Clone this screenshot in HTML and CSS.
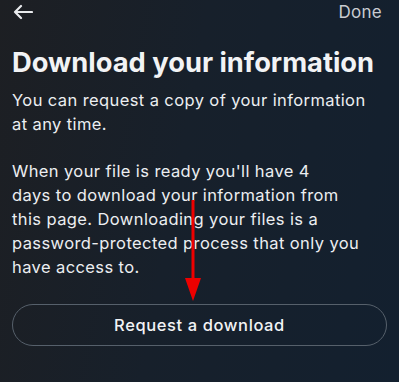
FILE: index.html
```html
<!DOCTYPE html>
<html lang="en">
<head>
  <meta charset="UTF-8" />
  <meta name="viewport" content="width=device-width, initial-scale=1.0" />
  <title>Download your information</title>
  <link rel="stylesheet" href="styles.css">
</head>
<body>
  <div class="top-bar">
    <a href="#" class="back">
      <svg width="20" height="16" viewBox="0 0 20 16" fill="none" stroke="#e8eaed" stroke-width="2.2" stroke-linecap="round" stroke-linejoin="round">
        <path d="M19 8H2M8 2L2 8l6 6"/>
      </svg>
    </a>
    <span class="done">Done</span>
  </div>

  <div class="container">
    <h1 class="header">Download your information</h1>
    <p class="text">You can request a copy of your information<br>at any time.</p>
    <p class="text last">When your file is ready you'll have 4<br>days to download your information from<br>this page. Downloading your files is a<br>password-protected process that only you<br>have access to.</p>

    <button class="button">Request a download</button>
  </div>

  <!-- seta vermelha de anotação -->
  <svg class="annotation" width="20" height="104" viewBox="0 0 20 104">
    <rect x="8.5" y="0" width="3" height="82" fill="#ee0000"/>
    <polygon points="2,78 18,78 10,101" fill="#ee0000"/>
  </svg>
</body>
</html>
```

FILE: styles.css
```css
body {
  margin: 0;
  padding: 0;
  font-family: 'Inter', 'Noto Sans', sans-serif;
  background: linear-gradient(100deg, #1d1f23 0%, #17202b 45%, #13202f 100%);
  color: #f2f3f5;
  width: 399px;
  height: 382px;
  overflow: hidden;
  position: relative;
}

.top-bar {
  display: flex;
  justify-content: space-between;
  align-items: center;
  padding: 1px 17px 0 13px;
  height: 22px;
}

.back {
  display: flex;
}

.done {
  font-size: 17px;
  color: #c9ccd1;
  letter-spacing: 0.3px;
}

.container {
  padding: 0 12px;
}

.header {
  font-size: 27.3px;
  font-weight: 700;
  margin: 23px 0 0;
  line-height: 34px;
  white-space: nowrap;
}

.text {
  font-size: 16.5px;
  line-height: 24px;
  letter-spacing: 0.4px;
  margin: 8px 0 23px;
  color: #eceef1;
  white-space: nowrap;
}

.text + .text {
  margin-top: 0;
}

.text.last {
  margin-bottom: 0;
}

.button {
  display: block;
  width: 100%;
  height: 42px;
  margin-top: 25px;
  background: transparent;
  border: 1px solid #56606b;
  border-radius: 21px;
  color: #f2f3f5;
  font-family: inherit;
  font-size: 16.5px;
  font-weight: 500;
  letter-spacing: 0.6px;
  cursor: pointer;
}

.annotation {
  position: absolute;
  left: 183px;
  top: 200px;
}
```
